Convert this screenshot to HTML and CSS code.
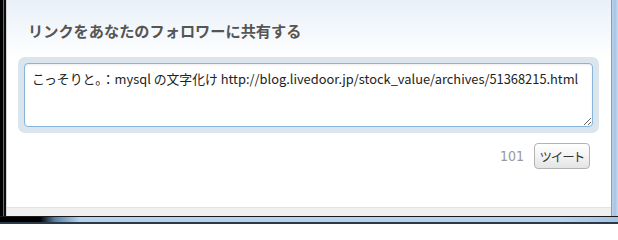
FILE: index.html
```html
<!DOCTYPE html>
<html lang="ja">
<head>
<meta charset="utf-8">
<link rel="stylesheet" href="styles.css">
</head>
<body>
<div class="screen">
  <div class="row">
    <div class="frame-left"></div>
    <div class="window">
      <div class="content">
        <h1 class="title">リンクをあなたのフォロワーに共有する</h1>
        <div class="ring">
          <textarea class="box">こっそりと。：mysql の文字化け http://blog.livedoor.jp/stock_value/archives/51368215.html</textarea>
        </div>
        <div class="actions">
          <span class="count">101</span>
          <button class="tweet">ツイート</button>
        </div>
      </div>
      <div class="status"></div>
    </div>
    <div class="frame-right"></div>
  </div>
  <div class="frame-bottom"></div>
</div>
</body>
</html>
```

FILE: styles.css
```css
html, body {
  margin: 0;
  padding: 0;
  background: #ffffff;
}
.screen {
  width: 618px;
  height: 224px;
  display: flex;
  flex-direction: column;
  overflow: hidden;
}
.row {
  display: flex;
  flex: 1;
  min-height: 0;
}
.frame-left {
  width: 7px;
  flex: none;
  background: linear-gradient(to right, #000 0, #000 3px, #6a6a6a 3px, #6a6a6a 4px, #0c0c0c 4px, #0c0c0c 6px, #d6d6d6 6px);
}
.window {
  flex: 1;
  display: flex;
  flex-direction: column;
  min-width: 0;
}
.content {
  flex: 1;
  background: linear-gradient(to bottom, #e8f0f8 0, #f4f8fc 30px, #ffffff 60px);
  padding: 0 13px 0 11px;
  display: flex;
  flex-direction: column;
}
.title {
  margin: 18px 0 0 10px;
  height: 24px;
  font-family: "Noto Sans CJK JP", sans-serif;
  font-size: 15.2px;
  line-height: 24px;
  font-weight: bold;
  color: #555555;
  letter-spacing: 0;
}
.ring {
  margin-top: 15px;
  width: 570px;
  padding: 6px 5px 6px 6px;
  background: #dbe5ee;
  border-radius: 7px;
  display: flex;
}
.box {
  width: 569px;
  height: 64px;
  box-sizing: border-box;
  margin: 0;
  border: 1px solid #86b4da;
  border-radius: 4px;
  padding: 6px 7px;
  font-family: "Noto Sans CJK JP", sans-serif;
  font-size: 12.85px;
  line-height: 18px;
  color: #222;
  background: #fff;
  box-shadow: inset 0 1px 2px rgba(0, 0, 0, 0.08);
  outline: none;
}
.actions {
  margin-top: 10px;
  margin-right: 8px;
  display: flex;
  justify-content: flex-end;
  align-items: center;
  gap: 10px;
}
.count {
  font-family: "DejaVu Sans Condensed", "Liberation Sans", sans-serif;
  font-size: 14px;
  color: #999;
}
.tweet {
  width: 56px;
  height: 26px;
  margin: 0;
  padding: 0;
  border: 1px solid #b3b3b3;
  border-radius: 4px;
  background: linear-gradient(to bottom, #ffffff 0, #f3f3f3 50%, #e4e4e4 100%);
  font-family: "Noto Sans CJK JP", sans-serif;
  font-size: 12.5px;
  font-feature-settings: "palt";
  color: #333;
}
.status {
  height: 8px;
  flex: none;
  background: #f0f0f0;
  border-top: 1px solid #e2e2e2;
}
.frame-right {
  width: 7px;
  flex: none;
  background: linear-gradient(to right, #8a9bb0 0, #8a9bb0 1px, #b9d3ee 1px, #a7c4e4 4px, #c7dcf1 7px);
}
.frame-bottom {
  height: 8px;
  flex: none;
  background:
    linear-gradient(to bottom, #1a1a1a 0, #1a1a1a 1px, transparent 1px, transparent 6px, #2a3a4a 6px),
    linear-gradient(to right, #000 0, #000 40px, #5a7fa6 55px, #b8d2ec 80px, #b8d2ec 560px, #a6c3e2 618px);
}
```
